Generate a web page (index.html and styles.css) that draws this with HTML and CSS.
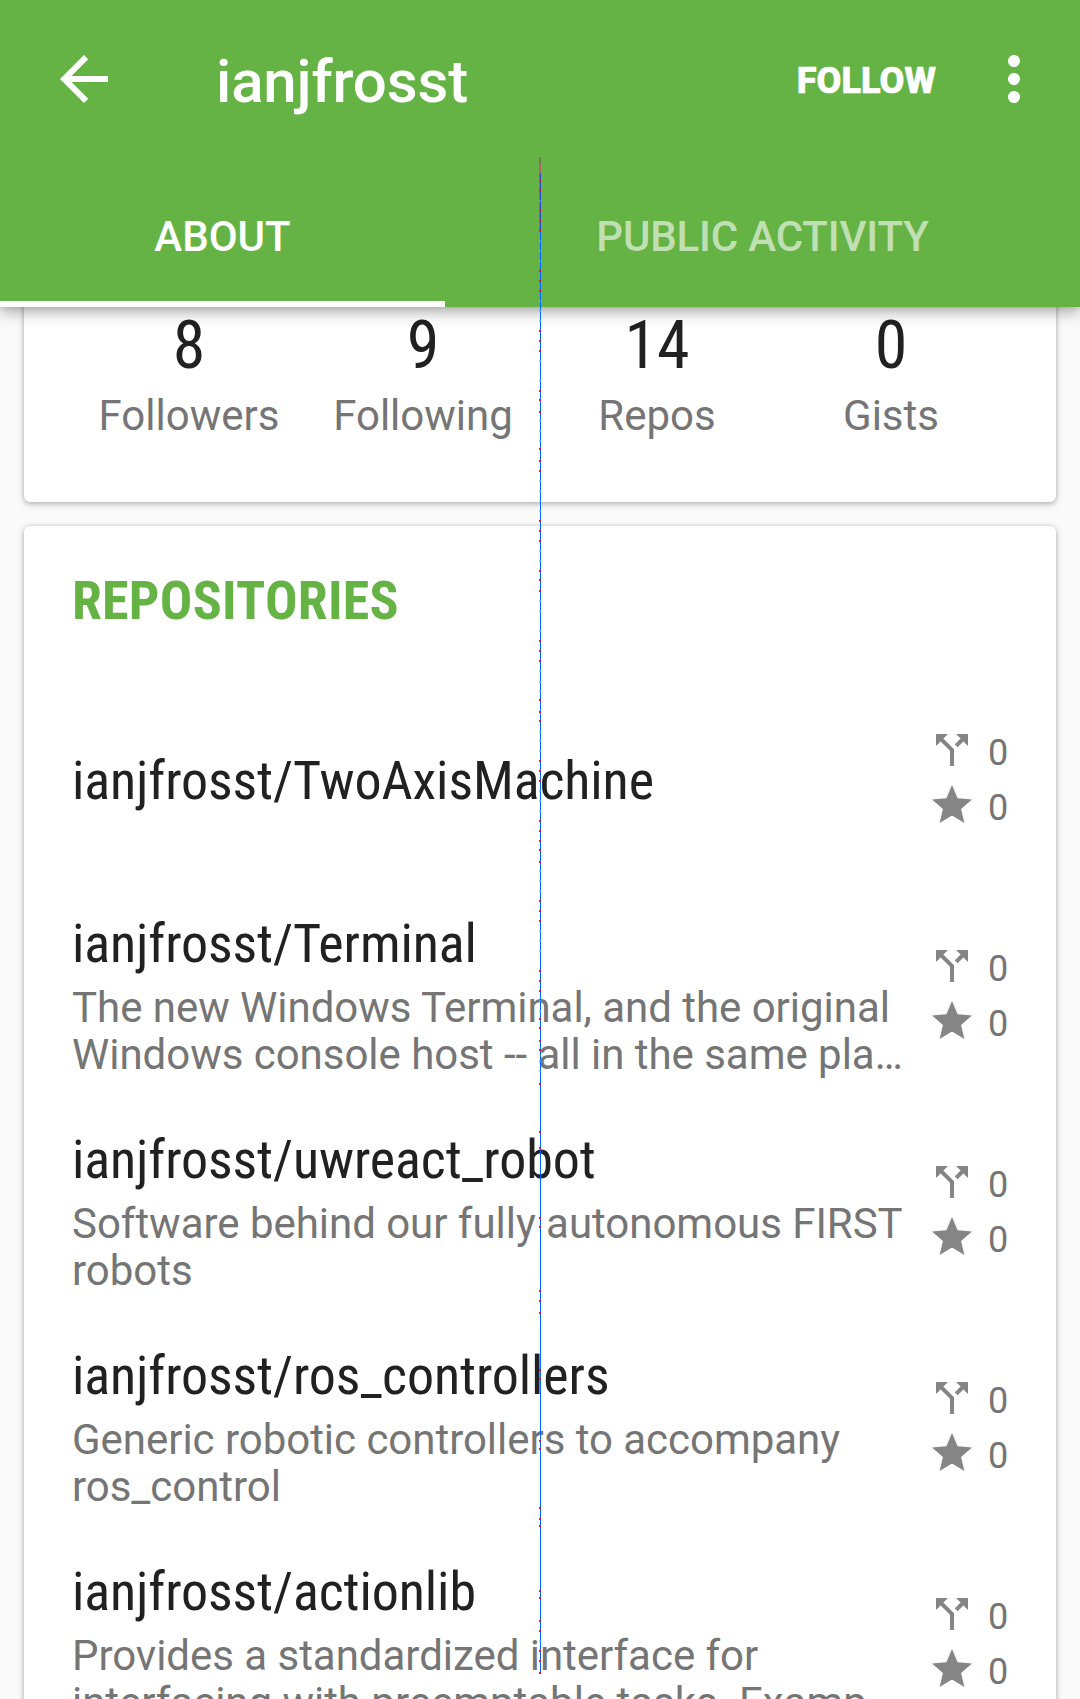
FILE: index.html
```html
<!DOCTYPE html>
<html lang="en">
<head>
<meta charset="utf-8">
<title>ianjfrosst</title>
<link rel="stylesheet" href="styles.css">
</head>
<body>
<svg class="defs" aria-hidden="true">
  <symbol id="fork" viewBox="0 0 24 24"><path d="M14 4l2.290 2.290-2.880 2.880 1.420 1.420 2.880-2.880L20 10V4zm-4 0H4v6l2.290-2.290 4.710 4.700V20h2v-8.410l-5.290-5.300z"/></symbol>
  <symbol id="star" viewBox="0 0 24 24"><path d="M12 17.270L18.180 21l-1.640-7.030L22 9.240l-7.190-.61L12 2 9.190 8.630 2 9.240l5.460 4.730L5.820 21z"/></symbol>
</svg>
<header class="header">
  <div class="toolbar">
    <svg class="back" viewBox="0 0 24 24"><path d="M20 11H7.830l5.590-5.590L12 4l-8 8 8 8 1.410-1.410L7.830 13H20v-2z"/></svg>
    <h1 class="title">ianjfrosst</h1>
    <span class="follow">FOLLOW</span>
    <svg class="more" viewBox="0 0 24 24"><path d="M12 8c1.100 0 2-.9 2-2s-.9-2-2-2-2 .9-2 2 .9 2 2 2zm0 2c-1.100 0-2 .9-2 2s.9 2 2 2 2-.9 2-2-.9-2-2-2zm0 6c-1.100 0-2 .9-2 2s.9 2 2 2 2-.9 2-2-.9-2-2-2z"/></svg>
  </div>
  <nav class="tabs">
    <div class="tab tab-about active">ABOUT</div>
    <div class="tab tab-activity">PUBLIC ACTIVITY</div>
  </nav>
</header>
<main class="content">
  <section class="card stats">
    <div class="stat"><div class="num">8</div><div class="label">Followers</div></div>
    <div class="stat"><div class="num">9</div><div class="label">Following</div></div>
    <div class="stat"><div class="num">14</div><div class="label">Repos</div></div>
    <div class="stat"><div class="num">0</div><div class="label">Gists</div></div>
  </section>
  <section class="card repos">
    <h2 class="heading">REPOSITORIES</h2>
    <article class="repo">
      <div class="info"><div class="name">ianjfrosst/TwoAxisMachine</div></div>
      <div class="counts"><div class="count"><svg><use href="#fork"/></svg><span>0</span></div><div class="count"><svg><use href="#star"/></svg><span>0</span></div></div>
    </article>
    <article class="repo">
      <div class="info"><div class="name">ianjfrosst/Terminal</div><div class="desc">The new Windows Terminal, and the original<br>Windows console host -- all in the same pla…</div></div>
      <div class="counts"><div class="count"><svg><use href="#fork"/></svg><span>0</span></div><div class="count"><svg><use href="#star"/></svg><span>0</span></div></div>
    </article>
    <article class="repo">
      <div class="info"><div class="name">ianjfrosst/uwreact_robot</div><div class="desc">Software behind our fully autonomous FIRST<br>robots</div></div>
      <div class="counts"><div class="count"><svg><use href="#fork"/></svg><span>0</span></div><div class="count"><svg><use href="#star"/></svg><span>0</span></div></div>
    </article>
    <article class="repo">
      <div class="info"><div class="name">ianjfrosst/ros_controllers</div><div class="desc">Generic robotic controllers to accompany<br>ros_control</div></div>
      <div class="counts"><div class="count"><svg><use href="#fork"/></svg><span>0</span></div><div class="count"><svg><use href="#star"/></svg><span>0</span></div></div>
    </article>
    <article class="repo">
      <div class="info"><div class="name">ianjfrosst/actionlib</div><div class="desc">Provides a standardized interface for<br>interfacing with preemptable tasks. Examp…</div></div>
      <div class="counts"><div class="count"><svg><use href="#fork"/></svg><span>0</span></div><div class="count"><svg><use href="#star"/></svg><span>0</span></div></div>
    </article>
  </section>
</main>
<svg class="trace" viewBox="539 157 2 1517" aria-hidden="true">
  <path class="trace-head" d="M540 157v6"/>
  <path class="trace-pink" d="M540 163v10"/>
  <path class="trace-shade" d="M539.500 173v57"/>
  <path class="trace-indigo" d="M540.500 173v57"/>
  <path class="trace-blue" d="M540.500 230V1673"/>
  <path class="trace-cyan" d="M540 200v2M540 240v2M540 250v2M540 260v2M540 300v2M540 310v2M540 320v2M540 360v2M540 380v2M540 420v2M540 430v2M540 440v2M540 480v2M540 490v2M540 500v2M540 510v2M540 550v2M540 560v2M540 600v2M540 610v2M540 630v2M540 670v2M540 681v2M540 690v2M540 731v2M540 740v2M540 750v2M540 790v2M540 800v2M540 810v2M540 870v2M540 880v2M540 890v2M540 930v2M540 940v2M540 950v2M540 1000v2M540 1010v2M540 1060v2M540 1070v2M540 1640v2"/>
  <path class="trace-red" d="M540 180v2M540 190v2M540 210v2M540 220v2M540 230v2M540 270v2M540 280v2M540 290v2M540 330v2M540 340v2M540 350v2M540 390v2M540 399v2M540 411v2M540 448v2M540 460v2M540 470v2M540 520v2M540 530v2M540 540v2M540 570v2M540 579v2M540 590v2M540 640v2M540 650v2M540 660v2M540 699v2M540 711v2M540 720v2M540 760v2M540 770v2M540 780v2M540 820v2M540 830v2M540 840v2M540 849v2M540 861v2M540 900v2M540 910v2M540 920v2M540 970v2M540 980v2M540 990v2M540 1018v2M540 1027v2M540 1040v2M540 1049v2M540 1083v2M540 1131v2M540 1147v2M540 1217v2M540 1226v2M540 1290v2M540 1300v2M540 1312v2M540 1369v2M540 1378v2M540 1440v2M540 1448v2M540 1507v2M540 1518v2M540 1525v2M540 1590v2M540 1597v2M540 1620v2M540 1630v2M540 1650v2M540 1660v2M540 1672v2"/>
</svg>
</body>
</html>
```
FILE: styles.css
```css
* { box-sizing: border-box; margin: 0; padding: 0; }
html, body { height: 1699px; overflow: hidden; }
body { position: relative; display: flex; flex-direction: column; background: #fafafa; color: #212121; font-family: Roboto, sans-serif; font-size: 42px; }
svg { display: block; fill: currentColor; flex: none; }
.defs { display: none; }
.header { position: relative; z-index: 1; flex: none; height: 307px; background: #66b345; color: #fff; box-shadow: 0 6px 14px rgba(0,0,0,.28), 0 0 8px rgba(0,0,0,.15); }
.toolbar { display: flex; align-items: center; height: 157px; padding-right: 30px; padding-left: 48px; }
.back, .more { width: 72px; height: 72px; }
.title { flex: 1; margin-left: 96px; padding-top: 6px; font-size: 60px; font-weight: 500; line-height: 70px; letter-spacing: -.15px; }
.follow { margin-right: 42px; padding-top: 5px; font-size: 36px; font-weight: 800; line-height: 42px; letter-spacing: .1px; -webkit-text-stroke: .7px #fff; }
.tabs { display: flex; height: 150px; }
.tab { padding-top: 55px; text-align: center; font-weight: 500; line-height: 50px; color: rgba(255,255,255,.6); }
.tab-about { width: 445px; }
.tab-activity { flex: 1; letter-spacing: -.18px; }
.active { color: #fff; border-bottom: 6px solid #fff; }
.content { flex: 1; min-height: 0; margin-top: -20px; padding: 0 24px; overflow: hidden; }
.card { background: #fff; border-radius: 6px; box-shadow: 0 2px 6px rgba(0,0,0,.26), 0 0 4px rgba(0,0,0,.12); }
.stats { display: flex; height: 215px; padding: 21px 48px; text-align: center; }
.stat { flex: 1; }
.num { font-family: "Roboto Condensed", Roboto, sans-serif; font-stretch: 75%; font-size: 66px; line-height: 76px; }
.label { line-height: 50px; margin-top: 7px; color: #757575; }
.repos { height: 1300px; margin-top: 24px; padding: 47px 48px 0; }
.heading { height: 100px; font-family: "Roboto Condensed", Roboto, sans-serif; font-stretch: 75%; font-size: 54px; font-weight: 700; line-height: 56px; letter-spacing: .25px; color: #66b345; }
.repo { display: flex; align-items: center; height: 216px; }
.info { flex: 1; white-space: nowrap; }
.name { font-family: "Roboto Condensed", Roboto, sans-serif; font-stretch: 75%; font-size: 54px; line-height: 64px; letter-spacing: -.09px; }
.desc { padding: 8px 0 5px; line-height: 47px; letter-spacing: -.03px; color: #757575; }
.counts { width: 80px; padding-bottom: 1px; color: #858585; }
.count { display: flex; height: 55px; gap: 12px; }
.count svg { width: 48px; height: 48px; }
.count span { font-size: 36px; line-height: 54px; color: #757575; }
.trace { position: absolute; z-index: 2; left: 539px; top: 157px; width: 2px; height: 1517px; shape-rendering: crispEdges; }
.trace-head { stroke: #69795a; stroke-width: 2; }
.trace-pink { stroke: #b85f69; stroke-width: 2; }
.trace-shade { stroke: #5c8b4c; stroke-width: 1; }
.trace-indigo { stroke: #3042d8; stroke-width: 1; }
.trace-blue { stroke: #0066ff; stroke-width: 1; }
.trace-cyan { stroke: #35c3e8; stroke-width: 2; stroke-opacity: .6; }
.trace-red { stroke: #f0102a; stroke-width: 2; }
```
